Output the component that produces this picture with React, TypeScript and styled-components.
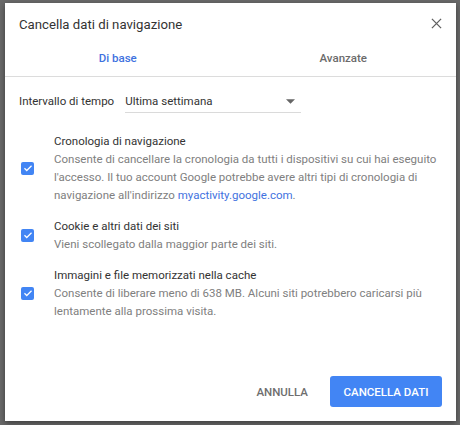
import React, { useState } from 'react';
import styled, { createGlobalStyle } from 'styled-components';

const GlobalStyle = createGlobalStyle`
  html, body {
    margin: 0;
    padding: 0;
    background: #6a6a6a;
    font-family: Roboto, 'Liberation Sans', Arial, sans-serif;
  }
`;

const Backdrop = styled.div`
  width: 460px;
  height: 425px;
  box-sizing: border-box;
  padding: 3px 4px 4px 5px;
  background: #6a6a6a;
`;

const Dialog = styled.div`
  width: 451px;
  height: 418px;
  background: #ffffff;
  box-shadow: 0 2px 6px rgba(0, 0, 0, 0.45);
  display: flex;
  flex-direction: column;
`;

const Header = styled.div`
  display: flex;
  align-items: center;
  justify-content: space-between;
  padding: 10px 14px 3px 14px;
  height: 24px;
`;

const Title = styled.h2`
  margin: 0;
  font-size: 13.2px;
  font-weight: 400;
  line-height: 20px;
  color: #333333;
`;

const CloseButton = styled.button`
  border: none;
  background: none;
  padding: 0;
  width: 16px;
  height: 16px;
  display: flex;
  align-items: center;
  justify-content: center;
  cursor: pointer;
  margin-right: -2px;
  margin-bottom: 4px;
`;

const Tabs = styled.div`
  display: grid;
  grid-template-columns: 1fr 1fr;
  height: 36px;
  border-bottom: 1px solid #dcdcdc;
`;

const Tab = styled.button<{ active?: boolean }>`
  border: none;
  background: none;
  padding: 0;
  font-family: inherit;
  font-size: 11.5px;
  font-weight: 500;
  color: ${p => (p.active ? '#3f72e0' : '#6b6b6b')};
  cursor: pointer;
`;

const Body = styled.div`
  flex: 1;
  display: flex;
  flex-direction: column;
  padding: 12px 14px 0 14px;
`;

const RangeRow = styled.div`
  display: flex;
  align-items: center;
  gap: 11px;
  height: 24px;
`;

const Label = styled.span`
  font-size: 11.5px;
  color: #333333;
`;

const Select = styled.div`
  width: 176px;
  height: 23px;
  box-sizing: border-box;
  border-bottom: 1px solid #dadada;
  display: flex;
  align-items: center;
  justify-content: space-between;
  font-size: 11.5px;
  color: #333333;
  padding-right: 6px;
  margin-top: 1px;
`;

const Items = styled.div`
  display: flex;
  flex-direction: column;
  gap: 13px;
  margin-top: 19px;
`;

const Item = styled.label`
  display: flex;
  align-items: center;
  cursor: pointer;
`;

const CheckCell = styled.div`
  width: 33px;
  flex: none;
  display: flex;
  padding-left: 2px;
`;

const Box = styled.span<{ checked: boolean }>`
  width: 13px;
  height: 13px;
  border-radius: 2px;
  box-sizing: border-box;
  background: ${p => (p.checked ? '#4285f4' : '#ffffff')};
  border: ${p => (p.checked ? 'none' : '2px solid #777')};
  display: flex;
  align-items: center;
  justify-content: center;
`;

const ItemText = styled.div`
  display: flex;
  flex-direction: column;
`;

const ItemTitle = styled.div`
  font-size: 11.5px;
  line-height: 18px;
  color: #333333;
`;

const ItemDesc = styled.div`
  font-size: 11.5px;
  line-height: 18px;
  color: #808080;
`;

const Link = styled.a`
  color: #3f72e0;
  text-decoration: none;
`;

const Footer = styled.div`
  display: flex;
  justify-content: flex-end;
  align-items: center;
  gap: 8px;
  padding: 0 14px 14px 0;
`;

const Button = styled.button<{ primary?: boolean }>`
  height: 31px;
  width: ${p => (p.primary ? '112px' : 'auto')};
  padding: 0 ${p => (p.primary ? '0' : '14px')};
  border-radius: 3px;
  border: none;
  font-family: inherit;
  font-size: 11.5px;
  font-weight: 500;
  background: ${p => (p.primary ? '#4285f4' : 'transparent')};
  color: ${p => (p.primary ? '#ffffff' : '#6e6e6e')};
  cursor: pointer;
`;

const CheckIcon = () => (
  <svg width="10" height="10" viewBox="0 0 24 24">
    <path d="M3.5 12.5l5.5 5.5L20.5 6.5" fill="none" stroke="#fff" strokeWidth="3" />
  </svg>
);

interface Entry {
  title: string;
  desc: React.ReactNode;
}

const entries: Entry[] = [
  {
    title: 'Cronologia di navigazione',
    desc: (
      <>
        Consente di cancellare la cronologia da tutti i dispositivi su cui hai eseguito
        l'accesso. Il tuo account Google potrebbe avere altri tipi di cronologia di
        navigazione all'indirizzo <Link href="#">myactivity.google.com</Link>.
      </>
    ),
  },
  {
    title: 'Cookie e altri dati dei siti',
    desc: 'Vieni scollegato dalla maggior parte dei siti.',
  },
  {
    title: 'Immagini e file memorizzati nella cache',
    desc: 'Consente di liberare meno di 638 MB. Alcuni siti potrebbero caricarsi più lentamente alla prossima visita.',
  },
];

const App: React.FC = () => {
  const [checked, setChecked] = useState([true, true, true]);
  const [tab, setTab] = useState(0);

  const toggle = (i: number) =>
    setChecked(prev => prev.map((v, j) => (j === i ? !v : v)));

  return (
    <>
      <GlobalStyle />
      <Backdrop>
        <Dialog>
          <Header>
            <Title>Cancella dati di navigazione</Title>
            <CloseButton aria-label="Chiudi">
              <svg width="11" height="11" viewBox="0 0 12 12">
                <path d="M1 1l10 10M11 1L1 11" stroke="#5f5f5f" strokeWidth="1.4" />
              </svg>
            </CloseButton>
          </Header>
          <Tabs>
            <Tab active={tab === 0} onClick={() => setTab(0)}>Di base</Tab>
            <Tab active={tab === 1} onClick={() => setTab(1)}>Avanzate</Tab>
          </Tabs>
          <Body>
            <RangeRow>
              <Label>Intervallo di tempo</Label>
              <Select>
                Ultima settimana
                <svg width="9" height="5" viewBox="0 0 10 5">
                  <path d="M0 0h10L5 5z" fill="#666" />
                </svg>
              </Select>
            </RangeRow>
            <Items>
              {entries.map((e, i) => (
                <Item key={i} onClick={() => toggle(i)}>
                  <CheckCell>
                    <Box checked={checked[i]}>{checked[i] && <CheckIcon />}</Box>
                  </CheckCell>
                  <ItemText>
                    <ItemTitle>{e.title}</ItemTitle>
                    <ItemDesc>{e.desc}</ItemDesc>
                  </ItemText>
                </Item>
              ))}
            </Items>
          </Body>
          <Footer>
            <Button>ANNULLA</Button>
            <Button primary>CANCELLA DATI</Button>
          </Footer>
        </Dialog>
      </Backdrop>
    </>
  );
};

export default App;
